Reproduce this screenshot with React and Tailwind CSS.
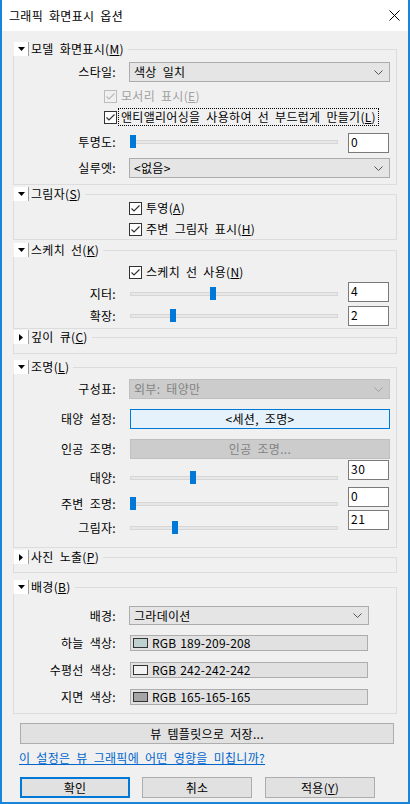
import React from "react";

const Mn = ({ c }) => <span className="underline">{c}</span>;

function Arrow({ open }) {
  return (
    <div className="w-[14px] h-[14px] bg-white flex items-center justify-center ml-px">
      {open ? (
        <svg width="7" height="4" viewBox="0 0 7 4"><path d="M0 0H7L3.5 4Z" fill="#000" /></svg>
      ) : (
        <svg width="4" height="7" viewBox="0 0 4 7"><path d="M0 0V7L4 3.5Z" fill="#000" /></svg>
      )}
    </div>
  );
}

function Group({ title, mn, open = true, mt, h, children }) {
  return (
    <div className="flex flex-col" style={{ marginTop: mt }}>
      <div className="flex items-start h-[14px]">
        <Arrow open={open} />
        <div className="w-px h-[14px] bg-[#a0a0a0]" />
        <div className="ml-[2px] text-[12px] leading-[14px] text-black whitespace-nowrap">
          {title}(<Mn c={mn} />)
        </div>
        <div className="flex-1 ml-[4px] mt-[7px] h-[7px] border-t border-r border-[#dcdcdc]" />
      </div>
      <div className="flex flex-col border-x border-b border-[#dcdcdc] box-border" style={{ height: h }}>
        {children}
      </div>
    </div>
  );
}

function Label({ children, className = "" }) {
  return (
    <div className={"w-[102px] shrink-0 text-right text-[12px] leading-[14px] text-black whitespace-nowrap " + className}>
      {children}
    </div>
  );
}

function Chevron({ color = "#444" }) {
  return (
    <svg width="9" height="5" viewBox="0 0 9 5" className="shrink-0">
      <path d="M0.5 0.5L4.5 4.5L8.5 0.5" fill="none" stroke={color} strokeWidth="1" />
    </svg>
  );
}

function Combo({ text, w, h = 20, disabled = false }) {
  return (
    <div
      className={
        "ml-[13px] flex items-center justify-between pl-[4px] pr-[6px] border text-[12px] leading-[14px] " +
        (disabled ? "bg-[#cccccc] border-[#bfbfbf] text-[#838383]" : "bg-[#e5e5e5] border-[#acacac] text-black")
      }
      style={{ width: w, height: h }}
    >
      <span>{text}</span>
      <Chevron color={disabled ? "#a0a0a0" : "#555"} />
    </div>
  );
}

function Check({ disabled = false }) {
  return (
    <div
      className={
        "w-[13px] h-[13px] shrink-0 border flex items-center justify-center " +
        (disabled ? "border-[#bcbcbc] bg-[#f0f0f0]" : "border-[#333333] bg-white")
      }
    >
      <svg width="11" height="11" viewBox="0 0 11 11">
        <path d="M1.5 5.5L4 8L9.5 2.5" fill="none" stroke={disabled ? "#bcbcbc" : "#333"} strokeWidth="1.2" />
      </svg>
    </div>
  );
}

function CheckRow({ mt, ml, disabled, focus, children }) {
  return (
    <div className="flex items-center h-[14px]" style={{ marginTop: mt, marginLeft: ml }}>
      <Check disabled={disabled} />
      {focus ? (
        <div className="ml-px px-[2px] h-[18px] flex items-center border border-dotted border-black text-[12px] leading-[14px] text-black whitespace-nowrap">
          {children}
        </div>
      ) : (
        <div className={"ml-[4px] text-[12px] leading-[14px] whitespace-nowrap " + (disabled ? "text-[#a0a0a0]" : "text-black")}>
          {children}
        </div>
      )}
    </div>
  );
}

function SliderRow({ label, value, pos, off, mt }) {
  return (
    <div className="flex items-start" style={{ marginTop: mt, height: Math.max(20, off + 13) }}>
      <Label className="h-[13px] leading-[13px]">
        <div style={{ marginTop: off }}>{label}</div>
      </Label>
      <div className="relative ml-[14px] w-[208px] h-[13px]" style={{ marginTop: off }}>
        <div className="absolute left-0 right-0 top-[5px] h-[4px] bg-[#e7e7e7] border border-[#d6d6d6]" />
        <div className="absolute top-0 w-[6px] h-[13px] bg-[#0078d7]" style={{ left: pos }} />
      </div>
      <div className="ml-[10px] w-[41px] h-[20px] bg-white border border-[#7a7a7a] pl-[2px] text-[12px] leading-[16px] tracking-[0.5px] text-black">
        {value}
      </div>
    </div>
  );
}

function Btn({ children, w, h = 20, ml = 0, mt = 0, variant = "normal" }) {
  const styles = {
    normal: "bg-[#e1e1e1] border border-[#adadad] text-black",
    disabled: "bg-[#cccccc] border border-[#bfbfbf] text-[#838383]",
    hot: "bg-[#e5f1fb] border border-[#0078d7] text-black",
    def: "bg-[#e1e1e1] border-2 border-[#0078d7] text-black",
  };
  return (
    <div
      className={"flex items-center justify-center text-[12px] leading-[14px] shrink-0 " + styles[variant]}
      style={{ width: w, height: h, marginLeft: ml, marginTop: mt }}
    >
      {children}
    </div>
  );
}

function ColorRow({ label, rgb, text, mt }) {
  return (
    <div className="flex items-center h-[16px]" style={{ marginTop: mt }}>
      <Label>{label}</Label>
      <div className="ml-[14px] w-[238px] h-[16px] bg-[#e1e1e1] border border-[#adadad] flex items-center pl-[2px]">
        <div className="w-[15px] h-[10px] border border-[#333]" style={{ background: rgb }} />
        <span className="ml-[4px] text-[12px] leading-[14px] tracking-[0.2px] [word-spacing:1px] text-black">{text}</span>
      </div>
    </div>
  );
}

export default function App() {
  return (
    <div className="w-[410px] h-[804px] flex flex-col bg-[#f0f0f0] border-x-2 border-b-2 border-[#1a85d8] font-['Noto_Sans_CJK_KR',sans-serif] tracking-[0.3px] [word-spacing:3px] overflow-hidden">
      <div className="h-[31px] shrink-0 bg-white flex items-center justify-between pl-[7px] pr-[8px]">
        <span className="text-[12px] leading-[14px] text-black">그래픽 화면표시 옵션</span>
        <svg width="11" height="11" viewBox="0 0 11 11">
          <path d="M0.5 0.5L10.5 10.5M10.5 0.5L0.5 10.5" stroke="#000" strokeWidth="1" />
        </svg>
      </div>

      <div className="flex flex-col px-[11px]">
        <Group title="모델 화면표시" mn="M" mt={11} h={129}>
          <div className="flex items-center h-[20px] mt-[6px]">
            <Label>스타일:</Label>
            <Combo text="색상 일치" w={261} />
          </div>
          <CheckRow mt={7} ml={90} disabled>
            모서리 표시(<Mn c="E" />)
          </CheckRow>
          <CheckRow mt={7} ml={90} focus>
            앤티앨리어싱을 사용하여 선 부드럽게 만들기(<Mn c="L" />)
          </CheckRow>
          <SliderRow label="투명도:" value="0" pos={0} off={2} mt={9} />
          <div className="flex items-center h-[20px] mt-[5px]">
            <Label>실루엣:</Label>
            <Combo text="<없음>" w={261} />
          </div>
        </Group>

        <Group title="그림자" mn="S" mt={2} h={39}>
          <CheckRow mt={0} ml={115}>
            투영(<Mn c="A" />)
          </CheckRow>
          <CheckRow mt={7} ml={115}>
            주변 그림자 표시(<Mn c="H" />)
          </CheckRow>
        </Group>

        <Group title="스케치 선" mn="K" mt={3} h={72}>
          <CheckRow mt={8} ml={115}>
            스케치 선 사용(<Mn c="N" />)
          </CheckRow>
          <SliderRow label="지터:" value="4" pos={80} off={5} mt={3} />
          <SliderRow label="확장:" value="2" pos={40} off={3} mt={4} />
        </Group>

        <Group title="깊이 큐" mn="C" open={false} mt={1} h={10} />

        <Group title="조명" mn="L" mt={6} h={174}>
          <div className="flex items-center h-[20px] mt-[5px]">
            <Label>구성표:</Label>
            <Combo text="외부: 태양만" w={261} disabled />
          </div>
          <div className="flex items-center h-[20px] mt-[10px]">
            <Label>태양 설정:</Label>
            <Btn w={260} ml={14} variant="hot">&lt;세션, 조명&gt;</Btn>
          </div>
          <div className="flex items-center h-[20px] mt-[10px]">
            <Label>인공 조명:</Label>
            <Btn w={260} ml={14} variant="disabled">인공 조명...</Btn>
          </div>
          <SliderRow label="태양:" value="30" pos={60} off={11} mt={1} />
          <SliderRow label="주변 조명:" value="0" pos={0} off={10} mt={3} />
          <SliderRow label="그림자:" value="21" pos={42} off={11} mt={0} />
        </Group>

        <Group title="사진 노출" mn="P" open={false} mt={2} h={9} />

        <Group title="배경" mn="B" mt={7} h={120}>
          <div className="flex items-center h-[19px] mt-[12px]">
            <Label>배경:</Label>
            <Combo text="그라데이션" w={240} h={19} />
          </div>
          <ColorRow label="하늘 색상:" rgb="rgb(189,209,208)" text="RGB 189-209-208" mt={10} />
          <ColorRow label="수평선 색상:" rgb="rgb(242,242,242)" text="RGB 242-242-242" mt={11} />
          <ColorRow label="지면 색상:" rgb="rgb(165,165,165)" text="RGB 165-165-165" mt={11} />
        </Group>

        <Btn w={374} h={21} ml={7} mt={9}>뷰 템플릿으로 저장...</Btn>

        <div className="ml-[6px] mt-[7px] h-[14px] text-[12px] leading-[14px] text-[#0066cc] underline whitespace-nowrap">
          이 설정은 뷰 그래픽에 어떤 영향을 미칩니까?
        </div>

        <div className="flex mt-[12px]">
          <Btn w={110} h={21} ml={7} variant="def">확인</Btn>
          <Btn w={110} h={21} ml={12}>취소</Btn>
          <Btn w={110} h={21} ml={13}>적용(<Mn c="Y" />)</Btn>
        </div>
      </div>
    </div>
  );
}
